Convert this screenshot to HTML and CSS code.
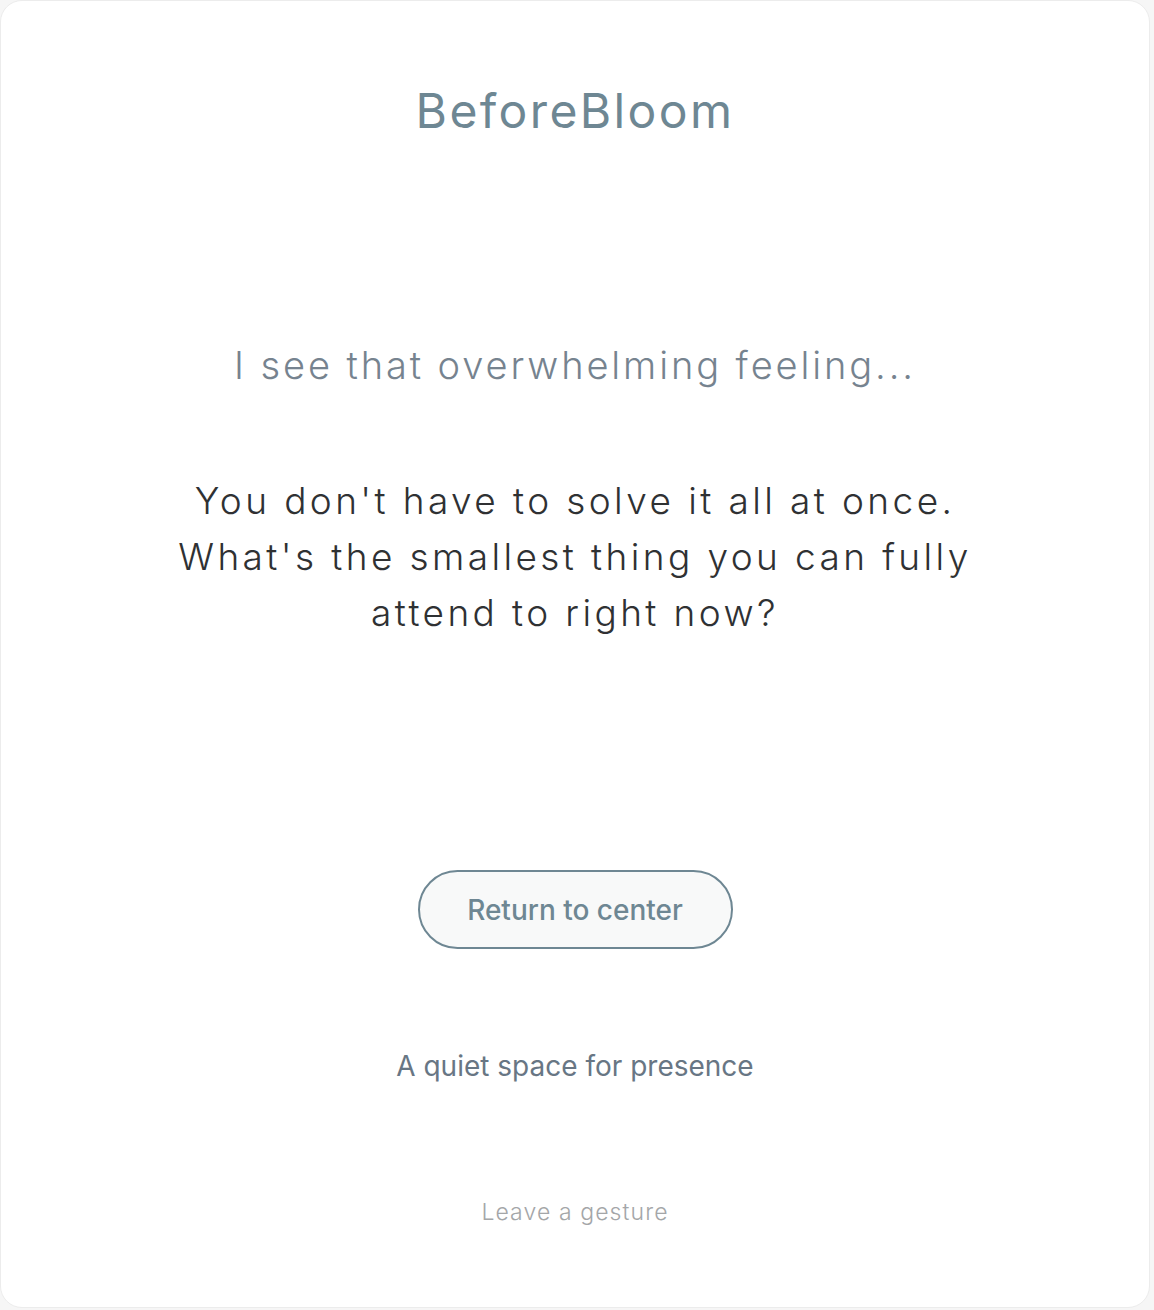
FILE: index.html
```html
<!DOCTYPE html>
<html>
<head>
<meta charset="utf-8">
<link rel="stylesheet" href="styles.css">
</head>
<body>
<main class="card">
  <header class="brand">BeforeBloom</header>
  <section class="center">
    <p class="ack">I see that overwhelming feeling...</p>
    <p class="prompt">You don't have to solve it all at once. What's the smallest thing you can fully attend to right now?</p>
  </section>
  <button class="return">Return to center</button>
  <p class="tagline">A quiet space for presence</p>
  <p class="gesture">Leave a gesture</p>
</main>
</body>
</html>
```
FILE: styles.css
```css
html, body {
  margin: 0;
  padding: 0;
  background: #f6f6f6;
}
body {
  font-family: Inter, "Noto Sans", sans-serif;
  width: 1154px;
  height: 1310px;
}
.card {
  box-sizing: border-box;
  width: 1150px;
  height: 1308px;
  background: #ffffff;
  border: 1px solid #ececec;
  border-radius: 22px;
  display: flex;
  flex-direction: column;
  align-items: center;
}
.brand {
  margin-top: 80px;
  font-size: 48px;
  font-weight: 400;
  letter-spacing: 2.4px;
  color: #6e8793;
  line-height: 60px;
}
.center {
  margin-top: 196px;
  display: flex;
  flex-direction: column;
  align-items: center;
}
.ack {
  margin: 0;
  font-size: 38px;
  font-weight: 300;
  letter-spacing: 2.9px;
  color: #76838f;
  line-height: 56px;
}
.prompt {
  margin: 80px 0 0;
  width: 840px;
  text-align: center;
  font-size: 37px;
  font-weight: 300;
  letter-spacing: 3.4px;
  color: #2f3133;
  line-height: 56px;
}
.return {
  margin-top: 229px;
  width: 315px;
  height: 79px;
  border: 2px solid #6e8793;
  border-radius: 40px;
  background: #f8f9f9;
  color: #6e8793;
  font-family: Inter, "Noto Sans", sans-serif;
  font-size: 28px;
  font-weight: 500;
}
.tagline {
  margin: 97px 0 0;
  font-size: 28px;
  font-weight: 400;
  color: #687684;
  line-height: 40px;
}
.gesture {
  margin: 108px 0 0;
  font-size: 23px;
  font-weight: 300;
  letter-spacing: 1.1px;
  color: #a4a6a8;
  line-height: 36px;
}
```
